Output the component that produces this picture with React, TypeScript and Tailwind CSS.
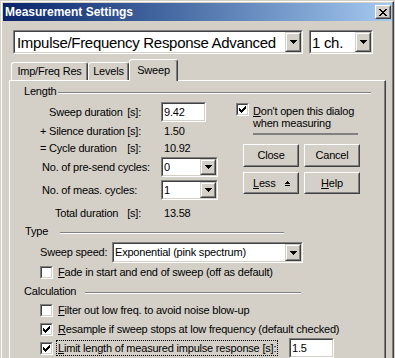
import React from 'react';

type Box = { className?: string; children?: React.ReactNode };

// 2px sunken well (edit boxes, combos, checkboxes)
function Sunken({ className = '', children }: Box) {
  return (
    <div className={`shrink-0 border border-t-[#808080] border-l-[#808080] border-b-white border-r-white ${className}`}>
      <div className="h-full w-full flex items-center bg-white border border-t-[#404040] border-l-[#404040] border-b-[#d4d0c8] border-r-[#d4d0c8]">
        {children}
      </div>
    </div>
  );
}

// raised push button
function Raised({ className = '', children }: Box) {
  return (
    <div className={`shrink-0 border border-t-white border-l-white border-b-[#404040] border-r-[#404040] ${className}`}>
      <div className="h-full w-full flex items-center bg-[#d4d0c8] border border-t-[#d4d0c8] border-l-[#d4d0c8] border-b-[#808080] border-r-[#808080]">
        {children}
      </div>
    </div>
  );
}

function DropButton() {
  return (
    <div className="h-full w-[16px] shrink-0 border border-t-[#d4d0c8] border-l-[#d4d0c8] border-b-[#404040] border-r-[#404040]">
      <div className="h-full w-full flex items-center justify-center bg-[#d4d0c8] border border-t-white border-l-white border-b-[#808080] border-r-[#808080]">
        <svg width="7" height="4" viewBox="0 0 7 4" shapeRendering="crispEdges">
          <path d="M0 0h7v1H0zM1 1h5v1H1zM2 2h3v1H2zM3 3h1v1H3z" fill="#000" />
        </svg>
      </div>
    </div>
  );
}

function Check({ checked = false }: { checked?: boolean }) {
  return (
    <Sunken className="w-[13px] h-[13px]">
      {checked && (
        <svg className="mx-auto" width="7" height="7" viewBox="0 0 7 7" shapeRendering="crispEdges">
          <path d="M0 2h1v3H0zM1 3h1v3H1zM2 4h1v3H2zM3 3h1v3H3zM4 2h1v3H4zM5 1h1v3H5zM6 0h1v3H6z" fill="#000" />
        </svg>
      )}
    </Sunken>
  );
}

function GroupHeader({ label, labelClass, lineClass }: { label: string; labelClass: string; lineClass: string }) {
  return (
    <div className="flex items-center h-[13px]">
      <span className={`shrink-0 ${labelClass}`}>{label}</span>
      <div className={`flex-1 mt-[3px] h-[2px] border-t border-t-[#808080] border-b border-b-white ${lineClass}`} />
    </div>
  );
}

function Tab({ label, className = '', selected = false }: { label: string; className?: string; selected?: boolean }) {
  return (
    <div
      className={`flex items-center justify-center rounded-t-[3px] border-l border-t border-white border-r border-r-[#404040] shadow-[inset_-1px_0_0_#808080] bg-[#d4d0c8] ${
        selected ? 'relative z-10 h-[22px] -mb-px' : 'h-[18px]'
      } ${className}`}
    >
      {label}
    </div>
  );
}

function CheckRow({ checked, className = '', children }: { checked?: boolean; className?: string; children: React.ReactNode }) {
  return (
    <div className={`flex items-center ml-[30px] h-[13px] ${className}`}>
      <Check checked={checked} />
      <span className="ml-[5px] whitespace-nowrap">{children}</span>
    </div>
  );
}

export default function App() {
  return (
    <div className="w-[395px] h-[358px] overflow-hidden bg-[#d4d0c8] pl-px pt-px pr-px text-[11px] leading-[13px] tracking-[-0.2px] text-black font-['Liberation_Sans',Arial,sans-serif]">
      <div className="h-[420px] border-l border-t border-white border-r border-r-[#404040]">
        <div className="h-full pl-px pt-px border-r border-r-[#808080] flex flex-col">
          {/* title bar */}
          <div className="h-[18px] shrink-0 flex items-center justify-between pl-[2px] pr-px bg-linear-to-r from-[#0a246a] to-[#a6caf0]">
            <span className="text-white font-bold text-[12px] tracking-normal">Measurement Settings</span>
            <Raised className="w-[16px] h-[14px]">
              <svg className="mx-auto" width="8" height="7" viewBox="0 0 8 7" shapeRendering="crispEdges">
                <path d="M0 0h2v1H0zM6 0h2v1H6zM1 1h2v1H1zM5 1h2v1H5zM2 2h4v1H2zM3 3h2v1H3zM2 4h4v1H2zM1 5h2v1H1zM5 5h2v1H5zM0 6h2v1H0zM6 6h2v1H6z" fill="#000" />
              </svg>
            </Raised>
          </div>

          {/* measurement type + channels */}
          <div className="flex gap-[6px] ml-[10px] mt-[9px] text-[15px] tracking-[-0.3px]">
            <Sunken className="w-[290px] h-[24px]">
              <span className="flex-1 pl-[2px] whitespace-nowrap">Impulse/Frequency Response Advanced</span>
              <DropButton />
            </Sunken>
            <Sunken className="w-[64px] h-[24px]">
              <span className="flex-1 pl-px whitespace-nowrap">1 ch.</span>
              <DropButton />
            </Sunken>
          </div>

          {/* tabs */}
          <div className="flex items-end h-[21px] mt-[5px] ml-[8px]">
            <Tab label="Imp/Freq Res" className="w-[77px]" />
            <Tab label="Levels" className="w-[41px]" />
            <Tab label="Sweep" className="w-[49px]" selected />
          </div>

          {/* tab page */}
          <div className="ml-[6px] w-[377px] h-[300px] pt-[4px] border-l border-t border-white border-r border-r-[#404040] shadow-[inset_-1px_0_0_#808080]">
            <GroupHeader label="Length" labelClass="ml-[14px] w-[34px]" lineClass="mr-[14px]" />

            <div className="flex">
              {/* left column */}
              <div className="w-[226px] shrink-0 pt-[4px]">
                <div className="flex items-center h-[20px]">
                  <div className="w-[151px] flex whitespace-nowrap">
                    <span className="pl-[39px]">Sweep duration</span>
                    <span className="ml-auto mr-[20px]">[s]:</span>
                  </div>
                  <Sunken className="w-[45px] h-[20px]">
                    <span className="pl-px">9.42</span>
                  </Sunken>
                </div>
                <div className="flex items-center h-[18px]">
                  <div className="w-[151px] flex whitespace-nowrap">
                    <span className="pl-[30px]">+ Silence duration</span>
                    <span className="ml-auto mr-[20px]">[s]:</span>
                  </div>
                  <span className="pl-[3px]">1.50</span>
                </div>
                <div className="flex items-center h-[17px]">
                  <div className="w-[151px] flex whitespace-nowrap">
                    <span className="pl-[30px]">= Cycle duration</span>
                    <span className="ml-auto mr-[20px]">[s]:</span>
                  </div>
                  <span className="pl-[3px]">10.92</span>
                </div>
                <div className="flex items-center h-[20px]">
                  <div className="w-[151px] pl-[32px] whitespace-nowrap">No. of pre-send cycles:</div>
                  <Sunken className="w-[57px] h-[20px]">
                    <span className="flex-1 pl-px">0</span>
                    <DropButton />
                  </Sunken>
                </div>
                <div className="flex items-center h-[20px] mt-[3px]">
                  <div className="w-[151px] pl-[32px] whitespace-nowrap">No. of meas. cycles:</div>
                  <Sunken className="w-[57px] h-[20px]">
                    <span className="flex-1 pl-px">1</span>
                    <DropButton />
                  </Sunken>
                </div>
                <div className="flex items-center h-[18px] mt-[4px]">
                  <div className="w-[151px] flex whitespace-nowrap">
                    <span className="pl-[45px]">Total duration</span>
                    <span className="ml-auto mr-[20px]">[s]:</span>
                  </div>
                  <span className="pl-[3px]">13.58</span>
                </div>
              </div>

              {/* right column */}
              <div className="pt-[5px]">
                <div className="flex items-start">
                  <Check checked />
                  <div className="ml-[4px] mt-[2px] leading-[12px] whitespace-nowrap">
                    <u>D</u>on't open this dialog
                    <br />
                    when measuring
                  </div>
                </div>
                <div className="ml-[17px] mt-[4px] w-[105px] h-[2px] bg-[#808080]" />
                <div className="ml-[7px] mt-[9px] grid grid-cols-[56px_56px] gap-[5px]">
                  <Raised className="h-[23px]">
                    <span className="mx-auto">Close</span>
                  </Raised>
                  <Raised className="h-[23px]">
                    <span className="mx-auto">Cancel</span>
                  </Raised>
                  <Raised className="h-[22px]">
                    <span className="pl-[8px]">
                      <u>L</u>ess
                    </span>
                    <svg className="ml-auto mr-[7px]" width="5" height="5" viewBox="0 0 5 5" shapeRendering="crispEdges">
                      <path d="M2 0h1v1H2zM1 1h3v1H1zM0 2h5v1H0zM0 4h5v1H0z" fill="#000" />
                    </svg>
                  </Raised>
                  <Raised className="h-[22px]">
                    <span className="mx-auto">
                      <u>H</u>elp
                    </span>
                  </Raised>
                </div>
              </div>
            </div>

            <div className="mt-[3px]">
              <GroupHeader label="Type" labelClass="ml-[15px] w-[35px]" lineClass="mr-[101px]" />
            </div>
            <div className="flex items-center ml-[30px] mt-[4px]">
              <span className="w-[72px] whitespace-nowrap">Sweep speed:</span>
              <Sunken className="w-[191px] h-[21px]">
                <span className="flex-1 pl-px whitespace-nowrap">Exponential (pink spectrum)</span>
                <DropButton />
              </Sunken>
            </div>
            <CheckRow className="mt-[3px]">
              <u>F</u>ade in start and end of sweep (off as default)
            </CheckRow>

            <div className="mt-[6px]">
              <GroupHeader label="Calculation" labelClass="ml-[14px] w-[61px]" lineClass="mr-[84px]" />
            </div>
            <CheckRow className="mt-[6px]">
              <u>F</u>ilter out low freq. to avoid noise blow-up
            </CheckRow>
            <CheckRow checked className="mt-[6px]">
              <u>R</u>esample if sweep stops at low frequency (default checked)
            </CheckRow>
            <div className="flex items-center ml-[30px] mt-[2px] h-[20px]">
              <div className="w-[249px] flex items-center">
                <Check checked />
                <span className="ml-[3px] px-px border border-dotted border-black leading-[14px] whitespace-nowrap">
                  <u>L</u>imit length of measured impulse response [s]:
                </span>
              </div>
              <Sunken className="w-[45px] h-[20px]">
                <span className="pl-px">1.5</span>
              </Sunken>
            </div>
          </div>
        </div>
      </div>
    </div>
  );
}
